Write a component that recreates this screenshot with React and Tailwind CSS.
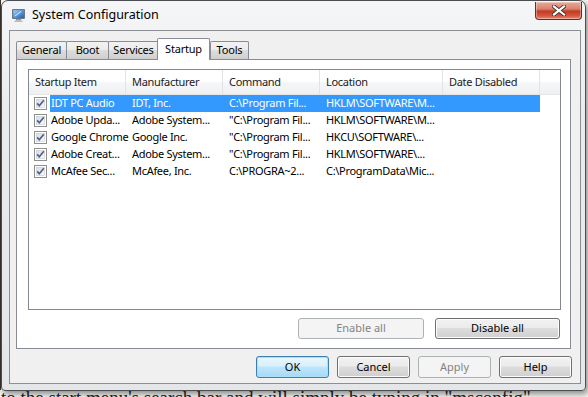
import React from "react";

const rows = [
  { item: "IDT PC Audio", man: "IDT, Inc.", cmd: "C:\\Program Fil...", loc: "HKLM\\SOFTWARE\\M...", sel: true },
  { item: "Adobe Upda...", man: "Adobe System...", cmd: "\"C:\\Program Fil...", loc: "HKLM\\SOFTWARE\\M..." },
  { item: "Google Chrome", man: "Google Inc.", cmd: "\"C:\\Program Fil...", loc: "HKCU\\SOFTWARE\\..." },
  { item: "Adobe Creat...", man: "Adobe System...", cmd: "\"C:\\Program Fil...", loc: "HKLM\\SOFTWARE\\..." },
  { item: "McAfee Sec...", man: "McAfee, Inc.", cmd: "C:\\PROGRA~2...", loc: "C:\\ProgramData\\Mic..." },
];

const tabs = [
  { label: "General", w: "w-[51px]" },
  { label: "Boot", w: "w-[43px]" },
  { label: "Services", w: "w-[51px]" },
  { label: "Startup", w: "w-[53px]", active: true },
  { label: "Tools", w: "w-[39px]" },
];

function CheckBox() {
  return (
    <svg width="13" height="13" viewBox="0 0 13 13" className="shrink-0">
      <defs>
        <linearGradient id="cbg" x1="0" y1="0" x2="1" y2="1">
          <stop offset="0" stopColor="#dcdcdc" />
          <stop offset="1" stopColor="#fafafa" />
        </linearGradient>
      </defs>
      <rect x="0.5" y="0.5" width="12" height="12" fill="#fff" stroke="#8e8f8f" />
      <rect x="2.5" y="2.5" width="8" height="8" fill="url(#cbg)" stroke="#c8c8c8" strokeWidth="0.6" />
      <path d="M3.2 6.4 L5.3 8.8 L9.8 3.2" fill="none" stroke="#4a5f97" strokeWidth="1.7" />
    </svg>
  );
}

function AppIcon() {
  return (
    <svg width="15" height="15" viewBox="0 0 15 15">
      <defs>
        <linearGradient id="scr" x1="0" y1="0" x2="1" y2="1">
          <stop offset="0" stopColor="#9fd2ff" />
          <stop offset="1" stopColor="#1d5fb8" />
        </linearGradient>
      </defs>
      <rect x="1" y="1" width="13" height="10" rx="1" fill="#6d7785" />
      <rect x="2.3" y="2.2" width="10.4" height="7.6" fill="url(#scr)" />
      <path d="M4 8 L10 3.5" stroke="#fff" strokeWidth="1" opacity="0.8" />
      <rect x="5" y="11" width="5" height="1.5" fill="#8a93a0" />
      <rect x="3.5" y="12.5" width="8" height="1.5" fill="#b5bcc6" />
    </svg>
  );
}

function Btn({ children, disabled, primary, w }) {
  return (
    <div
      className={`${w} flex items-center justify-center rounded-[3px] border ${
        disabled
          ? "border-[#adb2b5] bg-[#f4f4f4] text-[#838383]"
          : primary
          ? "border-[#3c7fb1] bg-[linear-gradient(#eaf6fd_0%,#d9f0fc_45%,#bee6fd_50%,#a7d9f5_100%)] text-black shadow-[inset_0_0_0_1px_#a8e0f8]"
          : "border-[#707070] bg-[linear-gradient(#f2f2f2_0%,#ebebeb_45%,#dddddd_50%,#cfcfcf_100%)] text-black shadow-[inset_0_0_0_1px_#fcfcfc]"
      }`}
    >
      {children}
    </div>
  );
}

export default function App() {
  return (
    <div
      className="relative w-[588px] h-[397px] overflow-hidden bg-[#f7f6f2]"
      style={{ fontFamily: '"Noto Sans", "Open Sans", sans-serif' }}
    >
      <div className="flex h-[390px]">
        <div className="w-[1px] bg-[#3a3530]" />
        {/* window */}
        <div className="relative z-10 flex flex-col w-[585px] h-[391px] border border-[#4a4d52] rounded-t-[7px] rounded-b-[4px] bg-[linear-gradient(#f5f6f7,#e9ebed_30%,#e4e6e8)] shadow-[2px_3px_6px_rgba(0,0,0,0.45)]">
          {/* title bar */}
          <div className="relative flex items-center h-[29px] pl-[9px]">
            <AppIcon />
            <span className="ml-[6px] text-[12.5px] text-black leading-none mb-[1px]">System Configuration</span>
            <div className="absolute right-[3px] top-[1px] w-[47px] h-[18px] rounded-b-[4px] border border-[#6e2a1e] border-t-0 bg-[linear-gradient(#e9a99a_0%,#d9846f_40%,#c53a22_55%,#d4553d_80%,#e48a70_100%)] flex items-center justify-center shadow-[inset_0_0_0_1px_rgba(255,255,255,0.35)]">
              <svg width="14" height="11" viewBox="0 0 14 11">
                <path d="M2 1.5 L12 9.5 M12 1.5 L2 9.5" stroke="#3a3a3a" strokeWidth="4" strokeLinecap="square" />
                <path d="M2 1.5 L12 9.5 M12 1.5 L2 9.5" stroke="#fff" strokeWidth="2.2" strokeLinecap="square" />
              </svg>
            </div>
          </div>
          {/* client */}
          <div className="ml-[7px] mr-[4px] h-[354px] border border-[#8b8e92] bg-[#f0f0f0] flex flex-col">
            <div className="flex items-end pl-[6px] pt-[6px] h-[28px] text-[11px] text-black tracking-[-0.2px]">
              {tabs.map((t) =>
                t.active ? (
                  <div
                    key={t.label}
                    className={`${t.w} relative z-10 -mb-[1px] h-[22px] -ml-[1px] flex items-start justify-center pt-[2px] border border-b-0 border-[#898c95] rounded-t-[2px] bg-white`}
                  >
                    {t.label}
                  </div>
                ) : (
                  <div
                    key={t.label}
                    className={`${t.w} h-[18px] flex items-center justify-center border border-b-0 border-[#898c95] rounded-t-[2px] bg-[linear-gradient(#f2f2f2,#ebebeb_50%,#dddddd_50%,#cfcfcf)] -mr-[1px]`}
                  >
                    {t.label}
                  </div>
                )
              )}
            </div>
            <div className="ml-[6px] mr-[9px] h-[290px] border border-[#898c95] bg-white pt-[9px] pl-[11px] pr-[9px] flex flex-col">
              {/* list view */}
              <div className="h-[241px] border border-[#828790] bg-white text-[11px] tracking-[-0.3px] overflow-hidden">
                <div className="flex h-[25px] bg-[linear-gradient(#ffffff_0%,#ffffff_45%,#f5f6f7_55%,#eff0f1_100%)] border-b border-[#e5e5e5]">
                  {[
                    ["Startup Item", "w-[97px]"],
                    ["Manufacturer", "w-[97px]"],
                    ["Command", "w-[97px]"],
                    ["Location", "w-[123px]"],
                    ["Date Disabled", "w-[97px]"],
                  ].map(([h, w]) => (
                    <div key={h} className={`${w} flex items-center pl-[6px] border-r border-[#e2e3e4] text-[#1a1a1a]`}>
                      {h}
                    </div>
                  ))}
                  <div className="flex-1" />
                </div>
                {rows.map((r) => (
                  <div key={r.item} className="flex h-[17px] items-center whitespace-nowrap">
                    <div className="w-[21px] flex items-center pl-[5px]">
                      <CheckBox />
                    </div>
                    <div
                      className={`flex h-full items-center w-[490px] ${
                        r.sel ? "bg-[#3399ff] text-white" : "text-black"
                      }`}
                    >
                      <div className="w-[76px] pl-[1px]">{r.item}</div>
                      <div className="w-[97px] pl-[6px]">{r.man}</div>
                      <div className="w-[97px] pl-[6px]">{r.cmd}</div>
                      <div className="w-[123px] pl-[6px]">{r.loc}</div>
                      <div className="w-[97px]" />
                    </div>
                  </div>
                ))}
              </div>
              <div className="flex justify-end gap-[11px] mt-[8px] mr-[1px] h-[21px] text-[11px]">
                <Btn disabled w="w-[126px]">Enable all</Btn>
                <Btn w="w-[125px]">Disable all</Btn>
              </div>
            </div>
            <div className="flex justify-end gap-[8px] mt-[7px] mr-[8px] h-[22px] text-[11px]">
              <Btn primary w="w-[73px]">OK</Btn>
              <Btn w="w-[73px]">Cancel</Btn>
              <Btn disabled w="w-[73px]">Apply</Btn>
              <Btn w="w-[73px]">Help</Btn>
            </div>
          </div>
        </div>
      </div>
      <div
        className="absolute left-[1px] top-[388px] whitespace-nowrap text-[19px] text-[#222] leading-none"
        style={{ fontFamily: '"Liberation Serif", serif' }}
      >
        to the start menu's search bar and will simply be typing in "msconfig"
      </div>
    </div>
  );
}
